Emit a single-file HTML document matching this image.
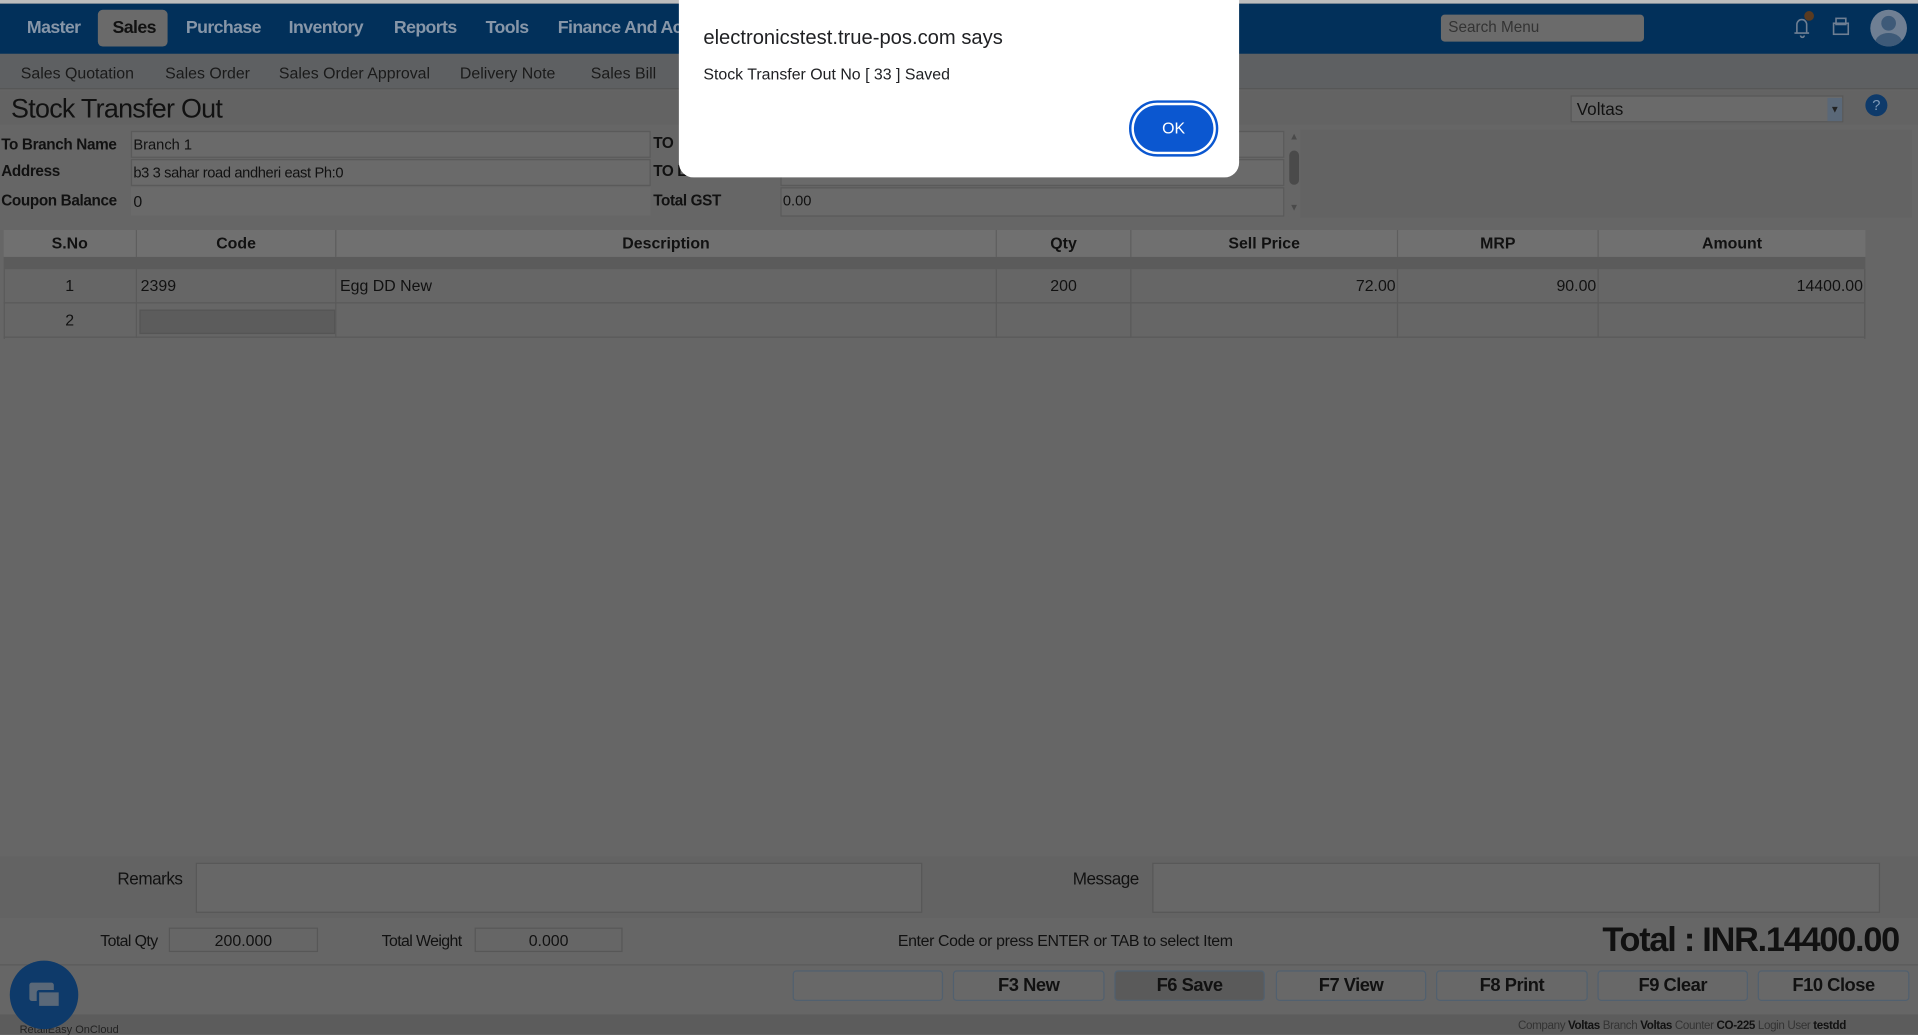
<!DOCTYPE html>
<html><head><meta charset="utf-8"><style>
*{box-sizing:border-box;margin:0;padding:0}
html,body{width:1918px;height:1034px;overflow:hidden;background:#666}
#w{position:absolute;left:0;top:0;width:1568px;height:845px;transform:scale(1.2232,1.2237);transform-origin:0 0;font-family:"Liberation Sans",sans-serif;background:#666;color:#111}
.a{position:absolute}
.nav{font-size:14.5px;font-weight:bold;color:#8796a8;letter-spacing:-.5px;top:15px}
.sub{font-size:13px;color:#1a1a1a;top:52px}
.lbl{font-size:12.5px;font-weight:bold;letter-spacing:-.3px;color:#111}
.inp{background:#6a6a6a;border:1px solid #5a5a5a;font-size:12px;padding:3px 1px;color:#111}
.th{position:absolute;top:188px;height:22px;font-size:13px;font-weight:bold;text-align:center;line-height:22px;border-right:1px solid #5e5e5e}
.td{position:absolute;height:28px;font-size:13px;line-height:28px;border-right:1px solid #5a5a5a;border-bottom:1px solid #5a5a5a}
.btn{position:absolute;top:793px;height:25px;border:1px solid #51606f;border-radius:3px;background:#686868;font-size:15px;font-weight:bold;text-align:center;line-height:24px;letter-spacing:-.4px;color:#111}
</style></head><body><div id="w">
<div class="a" style="left:0;top:0;width:1568px;height:3px;background:#bdbdbd"></div>
<div class="a" style="left:0;top:3px;width:1568px;height:41px;background:#02305a"></div>
<div class="a" style="left:80px;top:8px;width:57px;height:30px;background:#6a6a6a;border-radius:4px"></div>
<div class="a nav" style="left:22px">Master</div>
<div class="a nav" style="left:92px;color:#111">Sales</div>
<div class="a nav" style="left:152px">Purchase</div>
<div class="a nav" style="left:236px">Inventory</div>
<div class="a nav" style="left:322px">Reports</div>
<div class="a nav" style="left:397px">Tools</div>
<div class="a nav" style="left:456px">Finance And Acc</div>
<div class="a" style="left:1178px;top:12px;width:166px;height:22px;background:#6b6b6b;border-radius:3px;font-size:12.5px;color:#333;padding:3px 6px">Search Menu</div>
<svg class="a" style="left:1463px;top:6px" width="60" height="30"><path d="M4 21h12M6 21v-7a4 4 0 0 1 8 0v7M9 23a1.5 1.5 0 0 0 3 0" stroke="#6f7f93" fill="none" stroke-width="1.3"/><circle cx="16" cy="7" r="4" fill="#5a3b20"/><rect x="36" y="13" width="12" height="9" fill="none" stroke="#6f7f93" stroke-width="1.3"/><rect x="38" y="9" width="8" height="5" fill="none" stroke="#6f7f93" stroke-width="1.3"/></svg>
<div class="a" style="left:1529px;top:8px;width:30px;height:30px;border-radius:50%;background:#6f7f93;overflow:hidden"><div class="a" style="left:9px;top:5px;width:12px;height:12px;border-radius:50%;background:#3e5a78"></div><div class="a" style="left:4px;top:19px;width:22px;height:16px;border-radius:50%;background:#3e5a78"></div></div>
<div class="a" style="left:0;top:44px;width:1568px;height:29px;background:#5e6062;border-bottom:1px solid #565656"></div>
<div class="a sub" style="left:17px">Sales Quotation</div>
<div class="a sub" style="left:135px">Sales Order</div>
<div class="a sub" style="left:228px">Sales Order Approval</div>
<div class="a sub" style="left:376px">Delivery Note</div>
<div class="a sub" style="left:483px">Sales Bill</div>
<div class="a" style="left:0;top:74px;width:1568px;height:28px;background:#636363"></div>
<div class="a" style="left:9px;top:76px;font-size:22px;letter-spacing:-.6px">Stock Transfer Out</div>
<div class="a" style="left:1284px;top:78px;width:223px;height:22px;background:#6a6a6a;border:1px solid #585858;font-size:14px;padding:2px 4px">Voltas</div>
<div class="a" style="left:1494px;top:80px;width:12px;height:19px;background:#5a6878;font-size:8px;color:#222;text-align:center;line-height:19px">▼</div>
<div class="a" style="left:1525px;top:77px;width:18px;height:18px;border-radius:50%;background:#0e3a6a;color:#7f9ab8;font-size:12px;text-align:center;line-height:18px">?</div>
<div class="a" style="left:1063px;top:106px;width:500px;height:72px;background:#636363"></div>
<div class="a lbl" style="left:1px;top:111px">To Branch Name</div>
<div class="a lbl" style="left:1px;top:133px">Address</div>
<div class="a lbl" style="left:1px;top:157px">Coupon Balance</div>
<div class="a inp" style="left:107px;top:107px;width:425px;height:22px">Branch 1</div>
<div class="a inp" style="left:107px;top:130px;width:425px;height:22px;letter-spacing:-.3px">b3 3 sahar road andheri east Ph:0</div>
<div class="a inp" style="left:107px;top:153px;width:425px;height:23px;border-color:transparent;font-size:13px">0</div>
<div class="a lbl" style="left:534px;top:110px">TO</div>
<div class="a lbl" style="left:534px;top:133px">TO L</div>
<div class="a lbl" style="left:534px;top:157px">Total GST</div>
<div class="a inp" style="left:638px;top:107px;width:412px;height:22px"></div>
<div class="a inp" style="left:638px;top:130px;width:412px;height:22px"></div>
<div class="a inp" style="left:638px;top:153px;width:412px;height:24px">0.00</div>
<div class="a" style="left:1053px;top:107px;width:10px;height:70px;background:#666"><div class="a" style="left:1px;top:16px;width:8px;height:28px;border-radius:4px;background:#4a4a4a"></div><div class="a" style="left:1px;top:0;font-size:8px;color:#4a4a4a">▲</div><div class="a" style="left:1px;top:58px;font-size:8px;color:#4a4a4a">▼</div></div>
<div class="a" style="left:3px;top:188px;width:1522px;height:22px;background:#707070"></div>
<div class="a" style="left:3px;top:210px;width:1522px;height:10px;background:#5b5b5b"></div>
<div class="th" style="left:3px;width:109px">S.No</div>
<div class="th" style="left:112px;width:163px">Code</div>
<div class="th" style="left:275px;width:540px">Description</div>
<div class="th" style="left:815px;width:110px">Qty</div>
<div class="th" style="left:925px;width:218px">Sell Price</div>
<div class="th" style="left:1143px;width:164px">MRP</div>
<div class="th" style="left:1307px;width:218px;border:0">Amount</div>
<div class="a" style="left:3px;top:220px;width:1522px;height:57px;border-left:1px solid #5a5a5a;border-right:1px solid #5a5a5a"></div>
<div class="td" style="left:3px;top:220px;width:109px;text-align:center">1</div>
<div class="td" style="left:112px;top:220px;width:163px;padding-left:3px">2399</div>
<div class="td" style="left:275px;top:220px;width:540px;padding-left:3px">Egg DD New</div>
<div class="td" style="left:815px;top:220px;width:110px;text-align:center">200</div>
<div class="td" style="left:925px;top:220px;width:218px;text-align:right;padding-right:1px">72.00</div>
<div class="td" style="left:1143px;top:220px;width:164px;text-align:right;padding-right:1px">90.00</div>
<div class="td" style="left:1307px;top:220px;width:218px;text-align:right;padding-right:1px">14400.00</div>
<div class="td" style="left:3px;top:248px;width:109px;text-align:center">2</div>
<div class="td" style="left:112px;top:248px;width:163px"><div class="a" style="left:2px;top:5px;width:160px;height:20px;background:#5c5c5c;border:1px solid #555"></div></div>
<div class="td" style="left:275px;top:248px;width:540px"></div>
<div class="td" style="left:815px;top:248px;width:110px"></div>
<div class="td" style="left:925px;top:248px;width:218px"></div>
<div class="td" style="left:1143px;top:248px;width:164px"></div>
<div class="td" style="left:1307px;top:248px;width:218px"></div>
<div class="a" style="left:0;top:700px;width:1568px;height:50px;background:#636363"></div>
<div class="a" style="left:96px;top:710px;font-size:14px;letter-spacing:-.4px">Remarks</div>
<div class="a" style="left:160px;top:705px;width:594px;height:41px;background:#676767;border:1px solid #575757"></div>
<div class="a" style="left:877px;top:710px;font-size:14px;letter-spacing:-.4px">Message</div>
<div class="a" style="left:942px;top:705px;width:595px;height:41px;background:#676767;border:1px solid #575757"></div>
<div class="a" style="left:82px;top:761px;font-size:13px;letter-spacing:-.5px">Total Qty</div>
<div class="a" style="left:138px;top:758px;width:122px;height:20px;border:1px solid #575757;font-size:13px;text-align:center;line-height:19px">200.000</div>
<div class="a" style="left:312px;top:761px;font-size:13px;letter-spacing:-.5px">Total Weight</div>
<div class="a" style="left:388px;top:758px;width:121px;height:20px;border:1px solid #575757;font-size:13px;text-align:center;line-height:19px">0.000</div>
<div class="a" style="left:734px;top:761px;font-size:13px;letter-spacing:-.3px">Enter Code or press ENTER or TAB to select Item</div>
<div class="a" style="left:1310px;top:752px;font-size:28px;font-weight:bold;letter-spacing:-1px">Total : INR.14400.00</div>
<div class="a" style="left:0;top:788px;width:1568px;height:1px;background:#5a5a5a"></div>
<div class="btn" style="left:648px;width:123px"></div>
<div class="btn" style="left:779px;width:124px">F3 New</div>
<div class="btn" style="left:911px;width:123px;background:#5a5a5a">F6 Save</div>
<div class="btn" style="left:1043px;width:123px">F7 View</div>
<div class="btn" style="left:1174px;width:124px">F8 Print</div>
<div class="btn" style="left:1306px;width:123px">F9 Clear</div>
<div class="btn" style="left:1437px;width:124px">F10 Close</div>
<div class="a" style="left:0;top:829px;width:1568px;height:16px;background:#5c5c5c"></div>
<div class="a" style="left:16px;top:836px;font-size:9px;color:#222">RetailEasy OnCloud</div>
<div class="a" style="left:1241px;top:833px;font-size:9.5px;color:#333;letter-spacing:-.3px">Company <b style="color:#111">Voltas</b> Branch <b style="color:#111">Voltas</b> Counter <b style="color:#111">CO-225</b> Login User <b style="color:#111">testdd</b></div>
<div class="a" style="left:8px;top:785px;width:56px;height:56px;border-radius:50%;background:#0e3a6a"><div class="a" style="left:16px;top:18px;width:20px;height:15px;background:#5a6878;border-radius:2px"></div><div class="a" style="left:22px;top:24px;width:20px;height:15px;background:#5a6878;border-radius:2px;border:2px solid #0e3a6a"></div></div>
<div class="a" style="left:555px;top:0;width:458px;height:145px;background:#fff;border-radius:0 0 12px 12px"></div>
<div class="a" style="left:575px;top:22px;font-size:16.5px;color:#202124">electronicstest.true-pos.com says</div>
<div class="a" style="left:575px;top:53px;font-size:13px;color:#202124">Stock Transfer Out No [ 33 ] Saved</div>
<div class="a" style="left:923px;top:82px;width:73px;height:46px;border-radius:23px;border:2px solid #0b57d0;padding:2px"><div style="width:100%;height:100%;border-radius:20px;background:#0b57d0;color:#fff;font-size:13px;text-align:center;line-height:38px">OK</div></div>
</div></body></html>
